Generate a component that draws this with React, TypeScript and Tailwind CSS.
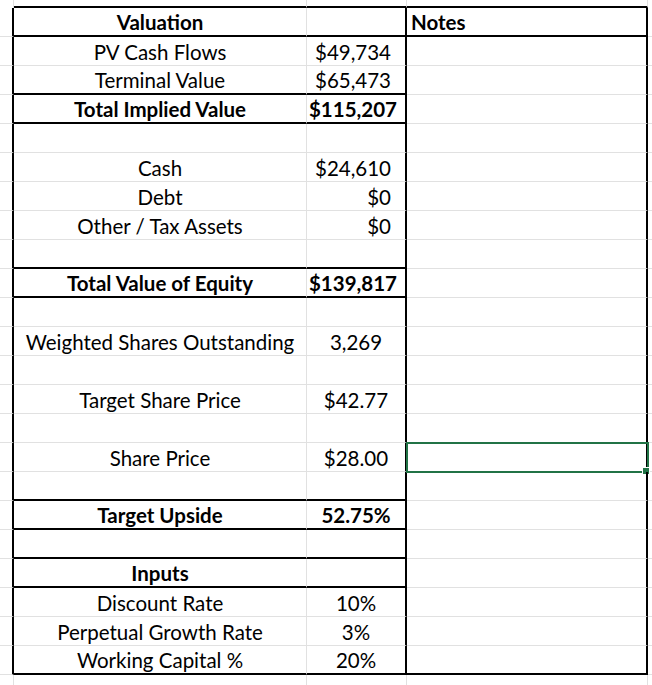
import React from "react";

type Row = {
  label?: string;
  value?: string;
  bold?: boolean;
  align?: "right" | "center";
  thick?: boolean; // thick bottom border across the A/B box
  notes?: string;
  notesThick?: boolean;
  selected?: boolean;
};

const rows: Row[] = [
  { label: "Valuation", bold: true, thick: true, notes: "Notes", notesThick: true },
  { label: "PV Cash Flows", value: "$49,734", align: "right" },
  { label: "Terminal Value", value: "$65,473", align: "right", thick: true },
  { label: "Total Implied Value", value: "$115,207", bold: true, align: "right", thick: true },
  {},
  { label: "Cash", value: "$24,610", align: "right" },
  { label: "Debt", value: "$0", align: "right" },
  { label: "Other / Tax Assets", value: "$0", align: "right" },
  { thick: true },
  { label: "Total Value of Equity", value: "$139,817", bold: true, align: "right", thick: true },
  {},
  { label: "Weighted Shares Outstanding", value: "3,269", align: "center" },
  {},
  { label: "Target Share Price", value: "$42.77", align: "center" },
  {},
  { label: "Share Price", value: "$28.00", align: "center", selected: true },
  { thick: true },
  { label: "Target Upside", value: "52.75%", bold: true, align: "center", thick: true },
  { thick: true },
  { label: "Inputs", bold: true, thick: true },
  { label: "Discount Rate", value: "10%", align: "center" },
  { label: "Perpetual Growth Rate", value: "3%", align: "center" },
  { label: "Working Capital %", value: "20%", align: "center", thick: true, notesThick: true },
];

const font = { fontFamily: "Lato, 'Noto Sans', sans-serif" };

const GridRow: React.FC<{ row: Row }> = ({ row }) => {
  const abBorder = row.thick ? "border-b-2 border-b-black" : "border-b border-b-[#e1e1e1]";
  const cBorder = row.notesThick ? "border-b-2 border-b-black" : "border-b border-b-[#e1e1e1]";
  return (
    <div className="flex h-[29px] text-[20.5px] leading-none text-black">
      <div className="w-[14px] shrink-0 border-b border-r-2 border-b-[#e1e1e1] border-r-black" />
      <div
        className={`flex w-[293px] shrink-0 items-end justify-center whitespace-nowrap border-r border-r-[#e1e1e1] pb-[3px] ${abBorder} ${
          row.bold ? "font-bold" : ""
        }`}
      >
        {row.label}
      </div>
      <div
        className={`flex w-[100px] shrink-0 items-end whitespace-nowrap border-r-2 border-r-black pb-[3px] ${abBorder} ${
          row.align === "center" ? "justify-center" : row.bold ? "justify-end pr-[8px]" : "justify-end pr-[14px]"
        } ${row.bold ? "font-bold" : ""}`}
      >
        {row.value}
      </div>
      <div
        className={`relative flex w-[241px] shrink-0 items-end border-r-2 border-r-black pb-[3px] pl-[4px] font-bold ${cBorder}`}
      >
        {row.notes}
        {row.selected && (
          <>
            <div className="absolute -left-[1px] -top-[1px] h-[31px] w-[243px] border-2 border-[#217346]" />
            <div className="absolute left-[236px] top-[25px] h-[6px] w-[6px] bg-[#217346] outline outline-1 outline-white" />
          </>
        )}
      </div>
      <div className="flex-1 border-b border-b-[#e1e1e1]" />
    </div>
  );
};

export default function App() {
  return (
    <div className="h-[685px] w-[652px] overflow-hidden bg-white" style={font}>
      <div className="flex h-[8px]">
        <div className="w-[14px] shrink-0 border-r border-r-[#e1e1e1]" />
        <div className="w-[293px] shrink-0 border-b-2 border-r border-b-black border-r-[#e1e1e1]" />
        <div className="w-[100px] shrink-0 border-b-2 border-r border-b-black border-r-[#e1e1e1]" />
        <div className="w-[241px] shrink-0 border-b-2 border-r border-b-black border-r-[#e1e1e1]" />
        <div className="flex-1" />
      </div>
      {rows.map((row, i) => (
        <GridRow key={i} row={row} />
      ))}
      <div className="flex h-[11px]">
        <div className="w-[14px] shrink-0 border-r border-r-[#e1e1e1]" />
        <div className="w-[293px] shrink-0 border-r border-r-[#e1e1e1]" />
        <div className="w-[100px] shrink-0 border-r border-r-[#e1e1e1]" />
        <div className="w-[241px] shrink-0 border-r border-r-[#e1e1e1]" />
        <div className="flex-1" />
      </div>
    </div>
  );
}
